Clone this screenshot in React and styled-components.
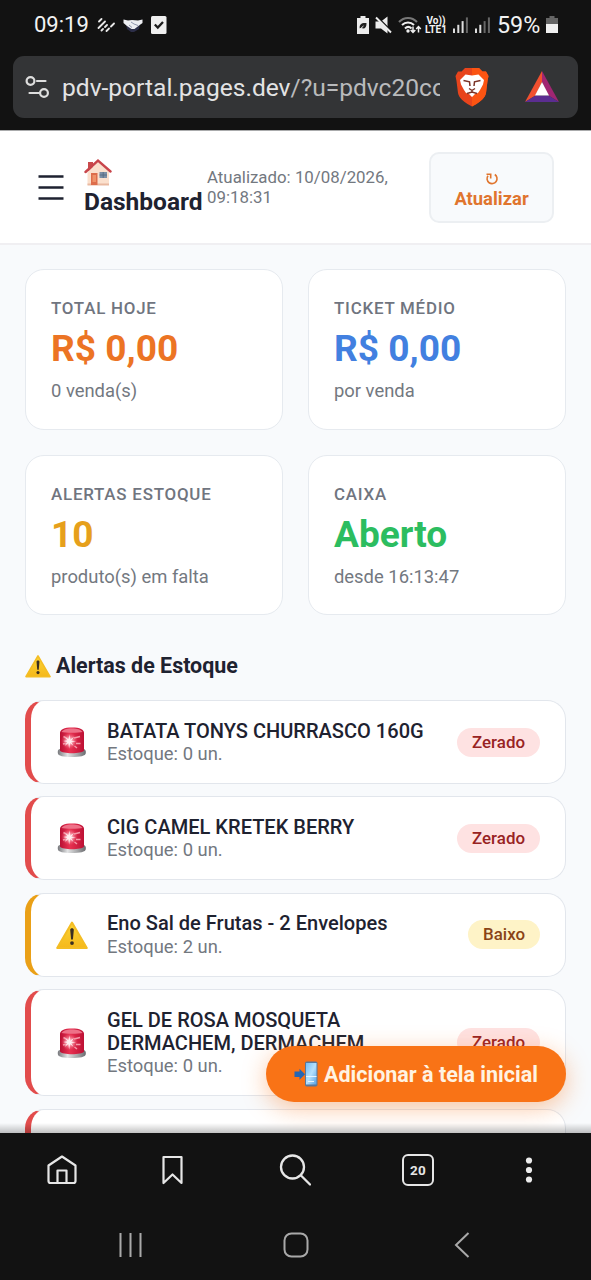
import React from "react";
import styled, { createGlobalStyle } from "styled-components";

const GlobalStyle = createGlobalStyle`
  * {
    box-sizing: border-box;
  }
  body {
    margin: 0;
    background: #121212;
    font-family: Roboto, "Liberation Sans", sans-serif;
  }
  svg {
    display: block;
    flex: none;
  }
`;

//Layout components
const Screen = styled.div`
  display: flex;
  flex-direction: column;
  width: 591px;
  height: 1280px;
  overflow: hidden;
`;

const BrowserTop = styled.div`
  height: 130px;
  flex: none;
  background: #121212;
`;

const StatusBar = styled.div`
  display: flex;
  align-items: center;
  justify-content: space-between;
  height: 56px;
  padding: 0 33px 7px 34px;
  color: #f2f2f2;
`;

const StatusGroup = styled.div`
  display: flex;
  align-items: center;
  gap: ${(props) => props.$gap}px;
`;

const Clock = styled.span`
  font-size: 22px;
  line-height: 26px;
  width: 55px;
  white-space: nowrap;
`;

const Percent = styled.span`
  font-size: 23.3px;
  line-height: 26px;
  width: 43px;
  letter-spacing: 0;
  white-space: nowrap;
`;

const Volte = styled.span`
  display: flex;
  flex-direction: column;
  align-items: center;
  width: 22px;
  font-size: 10px;
  font-weight: 700;
  line-height: 9px;
  white-space: nowrap;
`;

const AddressBar = styled.div`
  display: flex;
  align-items: center;
  height: 62px;
  margin: 0 13px;
  padding: 0 18px 0 12px;
  border-radius: 11px;
  background: #333436;
`;

const Address = styled.div`
  width: 378px;
  margin: 0 15px 0 12px;
  padding-top: 1px;
  overflow: hidden;
  white-space: nowrap;
  font-size: 24.55px;
  line-height: 35px;
  color: #e3e3e4;

  span {
    color: #b9babc;
  }
`;

const RewardsSlot = styled.div`
  margin-left: auto;
`;

const Page = styled.main`
  position: relative;
  flex: 1;
  min-height: 0;
  overflow: hidden;
  background: #f8fafc;
`;

const Header = styled.header`
  display: flex;
  align-items: center;
  height: 115px;
  padding: 0 37px 0 38px;
  border-top: 1px solid #aaabac;
  border-bottom: 2px solid #f0eff2;
  background: #fff;
`;

const Title = styled.h1`
  width: 123px;
  margin: 0 0 0 19px;
  font-size: 24.5px;
  font-weight: 700;
  line-height: 29px;
  color: #1e2230;
`;

const Updated = styled.div`
  flex: 1;
  font-size: 16.85px;
  line-height: 20.4px;
  color: #73787f;
`;

const RefreshButton = styled.button`
  display: flex;
  flex-direction: column;
  align-items: center;
  justify-content: center;
  gap: 2px;
  width: 125px;
  height: 71px;
  padding: 7px 0 0;
  border: 2px solid #eceff2;
  border-radius: 10px;
  background: #f8fafc;
  color: #e0752e;
  font-family: inherit;
  font-size: 18.4px;
  font-weight: 700;
  line-height: 22px;
`;

const Content = styled.div`
  padding: 24px 25px;
`;

const Cards = styled.div`
  display: grid;
  grid-template-columns: 1fr 1fr;
  gap: 25px;
`;

const Card = styled.div`
  height: 160.7px;
  padding: 25px;
  border: 1px solid #e6eaef;
  border-radius: 19px;
  background: #fff;
`;

const CardLabel = styled.div`
  font-size: 16.9px;
  font-weight: 500;
  line-height: 26px;
  letter-spacing: 0.78px;
  color: #70757f;
`;

const CardValue = styled.div`
  font-size: 37.1px;
  font-weight: 700;
  line-height: 56px;
  color: ${(props) => props.$color};
`;

const CardNote = styled.div`
  font-size: 18.4px;
  line-height: 27.5px;
  color: #73787f;
`;

const SectionTitle = styled.h2`
  display: flex;
  align-items: center;
  gap: 5px;
  height: 30px;
  margin: 35.6px 0 19.2px;
  font-size: 21.45px;
  font-weight: 700;
  color: #1e2230;
`;

const AlertList = styled.div`
  display: flex;
  flex-direction: column;
  gap: 12.5px;
`;

const AlertRow = styled.div`
  display: flex;
  align-items: center;
  gap: 19px;
  min-height: 83.8px;
  padding: 18.6px 25px;
  border: 1px solid #e2e6ec;
  border-left: 6px solid ${(props) => (props.$low ? "#eaa017" : "#e24c4c")};
  border-radius: 19px;
  background: #fff;
`;

const AlertText = styled.div`
  flex: 1;
`;

const AlertName = styled.div`
  font-size: 20.05px;
  font-weight: 500;
  line-height: 23.3px;
  color: #1e2230;
`;

const AlertStock = styled.div`
  font-size: 18.4px;
  line-height: 21.3px;
  color: #73787f;
`;

const Badge = styled.span`
  padding: 0 15px;
  border-radius: 15px;
  font-size: 16.9px;
  font-weight: 500;
  line-height: 29px;
  background: ${(props) => (props.$low ? "#fef3c7" : "#fee2e2")};
  color: ${(props) => (props.$low ? "#8a4316" : "#982323")};
`;

// floats over the list
const InstallButton = styled.button`
  position: absolute;
  right: 25px;
  bottom: 31px;
  display: flex;
  align-items: center;
  gap: 6px;
  width: 300px;
  height: 56px;
  padding: 0 0 0 28px;
  border: 0;
  border-radius: 28px;
  background: #f97316;
  box-shadow: 0 6px 25px rgba(249, 115, 22, 0.4);
  color: #fff3e2;
  font-family: inherit;
  font-size: 21.5px;
  font-weight: 700;
  white-space: nowrap;
`;

const PageFade = styled.div`
  position: absolute;
  left: 0;
  right: 0;
  bottom: 0;
  height: 10px;
  background: linear-gradient(rgba(0, 0, 0, 0), rgba(0, 0, 0, 0.24));
`;

const BrowserBottom = styled.div`
  height: 147px;
  flex: none;
  background: #121212;
`;

const Toolbar = styled.nav`
  display: grid;
  grid-template-columns: 124px 97px 148px 98px 124px;
  place-items: center;
  height: 74px;
`;

const SystemNav = styled.nav`
  display: grid;
  grid-template-columns: repeat(3, 1fr);
  place-items: center;
  height: 73px;
  padding: 3px 46px 0 48px;
`;

const TabCount = styled.div`
  width: 32px;
  height: 32px;
  border: 2.4px solid #e6e6e6;
  border-radius: 6px;
  font-size: 13.5px;
  font-weight: 700;
  line-height: 28px;
  text-align: center;
  letter-spacing: 0.3px;
  color: #e6e6e6;
`;

const HouseIcon = () => (
  <svg width="28" height="29" viewBox="0 0 28 29">
    <path d="M4 4h5v9H4z" fill="#c94a4c" />
    <path d="M3.5 14L14 4l11 10v13H3.5z" fill="#fbe0cd" />
    <path d="M3.5 25.500h21.500V27.500H3.500z" fill="#e9b9a0" />
    <path d="M1.500 14L14 2.500l12.500 11" fill="none" stroke="#c8454b" strokeWidth="2.400" strokeLinecap="round" />
    <path d="M7 15h6.500v12H7z" fill="#dd6d4b" />
    <path d="M8.500 17h3.500v7H8.500z" fill="#ef9269" />
    <path d="M15.500 14h7.500v6h-7.500z" fill="#7c90a6" />
    <path d="M19.200 14v6M15.500 17H23" stroke="#54687e" strokeWidth="0.800" />
  </svg>
);

const SirenIcon = () => (
  <svg width="32" height="32" viewBox="0 0 32 32">
    <defs>
      <linearGradient id="base" x1="0" y1="0" x2="1" y2="0">
        <stop offset="0" stopColor="#77787c" />
        <stop offset="0.35" stopColor="#e2e3e4" />
        <stop offset="0.7" stopColor="#a5a6a8" />
        <stop offset="1" stopColor="#6a6b6f" />
      </linearGradient>
      <linearGradient id="dome" x1="0" y1="0" x2="1" y2="0">
        <stop offset="0" stopColor="#b80f33" />
        <stop offset="0.4" stopColor="#e93252" />
        <stop offset="1" stopColor="#bd1034" />
      </linearGradient>
      <radialGradient id="glow">
        <stop offset="0" stopColor="#fff" />
        <stop offset="0.35" stopColor="#ffc3cd" stopOpacity="0.8" />
        <stop offset="1" stopColor="#ee4a66" stopOpacity="0" />
      </radialGradient>
    </defs>
    <path d="M1.800 25.500c0-3 5-4 14-4s14 1 14 4v1.500c0 3-6 4-14 4s-14-1-14-4z" fill="url(#base)" />
    <path d="M4 24.500V7C4 3.500 8 1.500 16 1.500s12 2 12 5.500v17.500c-2 3.600-22 3.600-24 0z" fill="url(#dome)" />
    <path d="M5.500 6C7 3.500 11 2.500 16 2.500s9 1 10.500 3.500C23 7 9 7 5.500 6z" fill="#ee7188" />
    <circle cx="13.500" cy="15" r="8.500" fill="url(#glow)" />
    <path d="M7.500 10.500l3.500 2M18 12l6-1.500M20 17.500h4.500M7 18l4-1M18.500 20l2.500 2" stroke="#f59aaa" strokeWidth="1.500" />
    <path d="M13.500 8.500l.6 5.500 4-3.500-3 4.500 5 .5-5 .8 2.500 3.700-3.500-3-1 5.500-.7-5.500-3.700 3 2.500-4-4-1 4.300-.8-2.300-3.200 3.300 2.300z" fill="#fff0f1" />
  </svg>
);

const WarningIcon = ({ size }) => (
  <svg width={size} height={size} viewBox="0 0 32 32">
    <defs>
      <linearGradient id="warn" x1="0" y1="0" x2="0" y2="1">
        <stop offset="0" stopColor="#fbd536" />
        <stop offset="1" stopColor="#f5b81b" />
      </linearGradient>
    </defs>
    <path d="M16 3.500L30.800 29H1.200z" fill="url(#warn)" stroke="#f4bd24" strokeWidth="2" strokeLinejoin="round" />
    <path d="M14.200 11c0-1.200.8-1.800 1.800-1.800s1.800.6 1.800 1.800l-.9 9.500h-1.800z" fill="#3a2e22" />
    <circle cx="16" cy="24.100" r="1.900" fill="#3a2e22" />
  </svg>
);

const PhoneIcon = () => (
  <svg width="24" height="26" viewBox="0 0 24 26">
    <defs>
      <linearGradient id="phone" x1="0" y1="0" x2="1" y2="1">
        <stop offset="0" stopColor="#76bdf5" />
        <stop offset="0.5" stopColor="#b4e0fc" />
        <stop offset="1" stopColor="#58a3e6" />
      </linearGradient>
    </defs>
    <rect x="11" y="0.500" width="12.500" height="25" rx="1.800" fill="#59789b" />
    <rect x="12" y="2" width="10.500" height="21.500" fill="url(#phone)" />
    <path d="M12 15.500h10.500M14 20.500h6" stroke="#e6f5ff" strokeWidth="1" />
    <path d="M0.500 10.500h5V7.800l5.500 5.400-5.500 5.500V16h-5z" fill="#2466b4" />
  </svg>
);

const RefreshIcon = () => (
  <svg width="14" height="14" viewBox="0 0 14 14" fill="none" stroke="#e0752e" strokeWidth="1.600">
    <path d="M9.800 2.500a5 5 0 1 1-6.800 1.200" />
    <path d="M1.500 2.300h4.200v4.200" />
  </svg>
);

const MenuIcon = () => (
  <svg width="27" height="27" viewBox="0 0 27 27" stroke="#1e2230" strokeWidth="2.700">
    <path d="M0.500 2.500h25M0.500 13.500h25M0.500 24.500h25" />
  </svg>
);

const TuneIcon = () => (
  <svg width="25" height="24" viewBox="0 0 25 24" fill="none" stroke="#dedede" strokeWidth="2.200" strokeLinecap="round">
    <circle cx="5.500" cy="6" r="3.900" />
    <path d="M12 6h8.500M4.500 18H14" />
    <circle cx="19" cy="18" r="3.900" />
  </svg>
);

const BraveIcon = () => (
  <svg width="34" height="40" viewBox="0 0 34 40">
    <path d="M10 1h14l3.500 3.500 3.500 0L33.500 9l-1 5-1.500 12c-.8 5-6 8.500-9.500 11L17 39.500 12.500 37C9 34.500 3.800 31 3 26L1.500 14 .5 9 3 4.500l3.500 0z" fill="#e8441c" />
    <path d="M17 1h7l3.500 3.500 3.500 0L33.500 9l-1 5-1.500 12c-.8 5-6 8.500-9.500 11L17 39.500z" fill="#fb5412" />
    <path d="M10.500 7.500l6.500 1 6.500-1L29 13l-1 4.500-3 5.500-2 3-3 1-3 3-3-3-3-1-2-3-3-5.500L5 13z" fill="#fff" />
    <path d="M8.500 13.500l6 1.300.5 4.200M25.500 13.500l-6 1.300-.5 4.200" fill="none" stroke="#7a3326" strokeWidth="1.500" />
    <path d="M14 21.500l3 2 3-2M17 23.500v2.500M12 26.500l5-1.500 5 1.500" fill="none" stroke="#7a3326" strokeWidth="1.400" />
  </svg>
);

const BatIcon = () => (
  <svg width="36" height="32" viewBox="0 0 36 32">
    <path d="M18 0L1 31l10.500-6.500L18 11z" fill="#f1502f" />
    <path d="M18 0l17 31-10.500-6.500L18 11z" fill="#a12672" />
    <path d="M1 31h34l-10.500-6.500h-13z" fill="#5b2d91" />
    <path d="M18 11l7 13.500H11z" fill="#fff" />
  </svg>
);

const StripesIcon = () => (
  <svg width="18" height="16" viewBox="0 0 18 16" stroke="#e8e8e8" strokeWidth="1.800" strokeLinecap="round">
    <path d="M2 4.500L4.500 2M1.500 11L8 4.500M4.500 13.500l1.500-1.500M8 10l2-2M9.500 14l2.500-2.500M14 9.500L17 6.500" />
  </svg>
);

const HandshakeIcon = () => (
  <svg width="20" height="14" viewBox="0 0 20 14">
    <path d="M3 6h14l-1 5-5 3H8l-4-3z" fill="#2c2e48" />
    <path d="M0.500 1.500L5 2.500l4-.5 6 .5 4.500-1V5L16 7.500 11.500 11H8.500L4 8 .5 5z" fill="#edeef2" />
    <path d="M8 4l3 2 4 1.500M6 7l3 2.500" stroke="#8f96ad" fill="none" />
  </svg>
);

const CheckIcon = () => (
  <svg width="16" height="18" viewBox="0 0 16 18">
    <rect width="15.500" height="18" rx="1.500" fill="#efefef" />
    <path d="M3.800 8.500l3 3 5.200-5.500" fill="none" stroke="#1c1c1c" strokeWidth="2.300" />
  </svg>
);

const SaverIcon = () => (
  <svg width="12" height="18" viewBox="0 0 12 18">
    <path d="M3.500 0h5v2H12v16H0V2h3.500z" fill="#ececec" />
    <path d="M2.800 12.500C2 8.500 4.500 6.500 9.500 7c.3 4.500-2 6.500-5.200 5z" fill="#202020" />
    <path d="M2 14l4.500-4" stroke="#ececec" />
  </svg>
);

const MuteIcon = () => (
  <svg width="17" height="18" viewBox="0 0 17 18">
    <path d="M.5 5.500H6l6.500-5v17L6 12.500H.5z" fill="#ececec" />
    <path d="M2 1L17 16" stroke="#121212" strokeWidth="2.200" />
    <path d="M1 1.500L16 16.500" stroke="#ececec" strokeWidth="1.900" />
  </svg>
);

const WifiIcon = () => (
  <svg width="24" height="18" viewBox="0 0 24 18" fill="none" strokeWidth="2">
    <path d="M1 6C6 .5 14 .5 19 6" stroke="#777" />
    <path d="M4 9c3.500-3.500 8.500-3.500 12 0M7 12.500c2-2 4.500-2 6.500 0" stroke="#eee" />
    <circle cx="10" cy="15" r="1.700" fill="#eee" />
    <path d="M15 10.500v6M12.700 14l2.300 2.500 2.300-2.500M20.500 16.500v-6M18.200 13l2.300-2.500 2.300 2.500" stroke="#eee" strokeWidth="1.500" />
  </svg>
);

const SignalIcon = ({ level }) => (
  <svg width="16" height="16" viewBox="0 0 16 16">
    {[0, 1, 2, 3].map((i) => (
      <rect
        key={i}
        x={i * 4.3}
        y={11.5 - i * 3.7}
        width="2"
        height={4.5 + i * 3.7}
        fill={i < level ? "#dedede" : "#666"}
      />
    ))}
  </svg>
);

const BatteryIcon = () => (
  <svg width="12" height="17" viewBox="0 0 12 17">
    <path d="M3.500 0h5v2H12v15H0V2h3.500z" fill="#656565" />
    <path d="M0 8h12v9H0z" fill="#f0f0f0" />
  </svg>
);

const HomeIcon = () => (
  <svg width="30" height="30" viewBox="0 0 30 30" fill="none" stroke="#e6e6e6" strokeWidth="2.200" strokeLinejoin="round">
    <path d="M1.500 10.500L15 1.500l13.500 9V26q0 2-2 2h-23q-2 0-2-2zM10.500 28V15.500h9V28" />
  </svg>
);

const BookmarkIcon = () => (
  <svg width="22" height="30" viewBox="0 0 22 30" fill="none" stroke="#e6e6e6" strokeWidth="2.200" strokeLinejoin="round">
    <path d="M1.500 2h18v26l-9-8.500-9 8.500z" />
  </svg>
);

const SearchIcon = () => (
  <svg width="32" height="32" viewBox="0 0 32 32" fill="none" stroke="#e6e6e6" strokeWidth="2.300" strokeLinecap="round">
    <circle cx="13.500" cy="13" r="11.500" />
    <path d="M22 21.500l9 9" />
  </svg>
);

const DotsIcon = () => (
  <svg width="8" height="26" viewBox="0 0 8 26" fill="#ececec">
    <circle cx="4" cy="3.500" r="3.100" />
    <circle cx="4" cy="13" r="3.100" />
    <circle cx="4" cy="22.500" r="3.100" />
  </svg>
);

const RecentsIcon = () => (
  <svg width="24" height="26" viewBox="0 0 24 26" stroke="#a9a9a9" strokeWidth="2">
    <path d="M1.500 1v24M11.500 1v24M21.500 1v24" />
  </svg>
);

const SquareIcon = () => (
  <svg width="26" height="26" viewBox="0 0 26 26" fill="none" stroke="#a9a9a9" strokeWidth="2">
    <rect x="1.500" y="1.500" width="23" height="23" rx="7" />
  </svg>
);

const BackIcon = () => (
  <svg width="16" height="26" viewBox="0 0 16 26" fill="none" stroke="#a9a9a9" strokeWidth="2">
    <path d="M14.500 1L2 13l12.500 12" />
  </svg>
);

const cards = [
  { label: "TOTAL HOJE", value: "R$ 0,00", note: "0 venda(s)", color: "#ec7424" },
  { label: "TICKET MÉDIO", value: "R$ 0,00", note: "por venda", color: "#4280e0" },
  { label: "ALERTAS ESTOQUE", value: "10", note: "produto(s) em falta", color: "#e6a01c" },
  { label: "CAIXA", value: "Aberto", note: "desde 16:13:47", color: "#2cbd60" },
];

const alerts = [
  { name: "BATATA TONYS CHURRASCO 160G", stock: 0 },
  { name: "CIG CAMEL KRETEK BERRY", stock: 0 },
  { name: "Eno Sal de Frutas - 2 Envelopes", stock: 2 },
  { name: "GEL DE ROSA MOSQUETA DERMACHEM, DERMACHEM", stock: 0 },
];

function App() {
  return (
    <>
      <GlobalStyle />
      <Screen>
        <BrowserTop>
          <StatusBar>
            <StatusGroup $gap={8}>
              <Clock>09:19</Clock>
              <StripesIcon />
              <HandshakeIcon />
              <CheckIcon />
            </StatusGroup>
            <StatusGroup $gap={6}>
              <SaverIcon />
              <MuteIcon />
              <StatusGroup $gap={3}>
                <WifiIcon />
                <Volte>
                  <span>Vo))</span>
                  <span>LTE1</span>
                </Volte>
              </StatusGroup>
              <SignalIcon level={3} />
              <SignalIcon level={2} />
              <Percent>59%</Percent>
              <BatteryIcon />
            </StatusGroup>
          </StatusBar>
          <AddressBar>
            <TuneIcon />
            <Address>
              pdv-portal.pages.dev<span>/?u=pdvc20cc</span>
            </Address>
            <BraveIcon />
            <RewardsSlot>
              <BatIcon />
            </RewardsSlot>
          </AddressBar>
        </BrowserTop>

        <Page>
          <Header>
            <MenuIcon />
            <Title>
              <HouseIcon />
              Dashboard
            </Title>
            <Updated>
              Atualizado: 10/08/2026,
              <br />
              09:18:31
            </Updated>
            <RefreshButton>
              <RefreshIcon />
              Atualizar
            </RefreshButton>
          </Header>
          <Content>
            <Cards>
              {cards.map((card) => (
                <Card key={card.label}>
                  <CardLabel>{card.label}</CardLabel>
                  <CardValue $color={card.color}>{card.value}</CardValue>
                  <CardNote>{card.note}</CardNote>
                </Card>
              ))}
            </Cards>
            <SectionTitle>
              <WarningIcon size={26} />
              Alertas de Estoque
            </SectionTitle>
            <AlertList>
              {alerts.map((alert) => {
                const low = alert.stock > 0;
                return (
                  <AlertRow key={alert.name} $low={low}>
                    {low ? <WarningIcon size={32} /> : <SirenIcon />}
                    <AlertText>
                      <AlertName>{alert.name}</AlertName>
                      <AlertStock>Estoque: {alert.stock} un.</AlertStock>
                    </AlertText>
                    <Badge $low={low}>{low ? "Baixo" : "Zerado"}</Badge>
                  </AlertRow>
                );
              })}
              <AlertRow />
            </AlertList>
          </Content>
          <InstallButton>
            <PhoneIcon />
            Adicionar à tela inicial
          </InstallButton>
          <PageFade />
        </Page>

        <BrowserBottom>
          <Toolbar>
            <HomeIcon />
            <BookmarkIcon />
            <SearchIcon />
            <TabCount>20</TabCount>
            <DotsIcon />
          </Toolbar>
          <SystemNav>
            <RecentsIcon />
            <SquareIcon />
            <BackIcon />
          </SystemNav>
        </BrowserBottom>
      </Screen>
    </>
  );
}

export default App;
